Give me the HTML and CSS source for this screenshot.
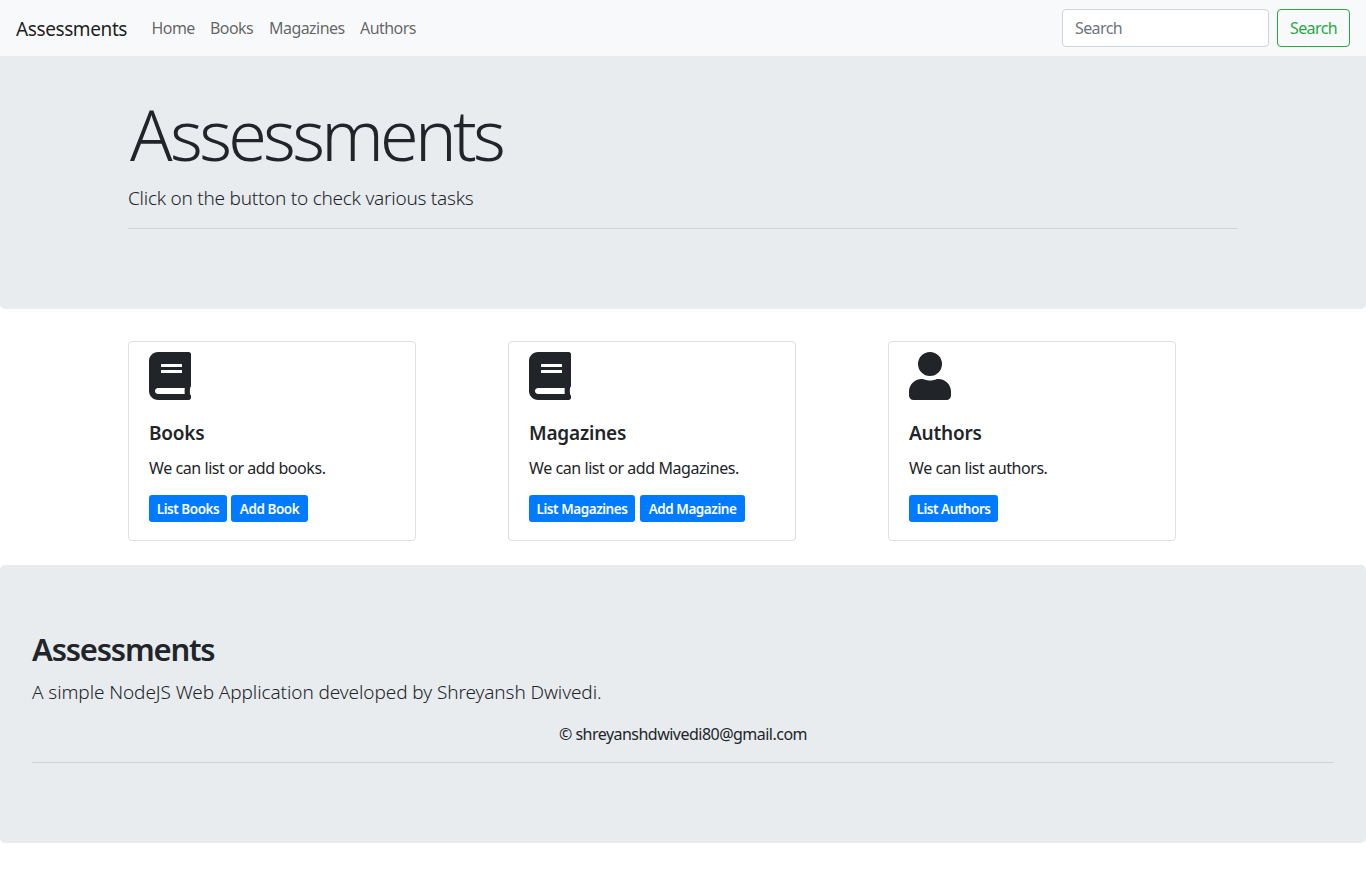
FILE: index.html
```html
<!DOCTYPE html>
<html lang="en">
<head>
<meta charset="utf-8">
<title>Assessments</title>
<link rel="stylesheet" href="styles.css">
</head>
<body>
<nav class="navbar">
  <a class="brand">Assessments</a>
  <ul class="nav">
    <li class="nav-home">Home</li>
    <li class="nav-books">Books</li>
    <li class="nav-magazines">Magazines</li>
    <li class="nav-authors">Authors</li>
  </ul>
  <form class="search">
    <input class="search-input" type="search" placeholder="Search">
    <button class="search-button" type="button">Search</button>
  </form>
</nav>
<header class="jumbotron hero">
  <div class="container">
    <h1 class="display"><span class="initial">A</span>ssessments</h1>
    <p class="lead hero-lead">Click on the button to check various tasks</p>
    <hr class="rule">
  </div>
</header>
<main class="container cards">
  <section class="card">
    <svg class="icon" viewBox="0 0 448 512"><path d="M448 360V24c0-13.300-10.700-24-24-24H96C43 0 0 43 0 96v320c0 53 43 96 96 96h328c13.300 0 24-10.700 24-24v-16c0-7.500-3.500-14.300-8.900-18.700-4.200-15.400-4.200-59.300 0-74.700 5.400-4.300 8.900-11.100 8.900-18.600zM128 134c0-3.300 2.700-6 6-6h212c3.300 0 6 2.700 6 6v20c0 3.300-2.700 6-6 6H134c-3.300 0-6-2.700-6-6zm0 64c0-3.300 2.700-6 6-6h212c3.300 0 6 2.700 6 6v20c0 3.300-2.700 6-6 6H134c-3.300 0-6-2.700-6-6zm253.400 250H96c-17.700 0-32-14.300-32-32 0-17.600 14.400-32 32-32h285.400c-1.900 17.100-1.900 46.900 0 64z"/></svg>
    <h2 class="card-title">Books</h2>
    <p class="card-text">We can list or add books.</p>
    <div class="actions"><a class="btn b1">List Books</a><a class="btn b2">Add Book</a></div>
  </section>
  <section class="card">
    <svg class="icon" viewBox="0 0 448 512"><path d="M448 360V24c0-13.300-10.700-24-24-24H96C43 0 0 43 0 96v320c0 53 43 96 96 96h328c13.300 0 24-10.700 24-24v-16c0-7.500-3.500-14.300-8.900-18.700-4.200-15.400-4.200-59.300 0-74.700 5.400-4.300 8.900-11.100 8.900-18.600zM128 134c0-3.300 2.700-6 6-6h212c3.300 0 6 2.700 6 6v20c0 3.300-2.700 6-6 6H134c-3.300 0-6-2.700-6-6zm0 64c0-3.300 2.700-6 6-6h212c3.300 0 6 2.700 6 6v20c0 3.300-2.700 6-6 6H134c-3.300 0-6-2.700-6-6zm253.400 250H96c-17.700 0-32-14.300-32-32 0-17.600 14.400-32 32-32h285.400c-1.900 17.100-1.900 46.900 0 64z"/></svg>
    <h2 class="card-title">Magazines</h2>
    <p class="card-text">We can list or add Magazines.</p>
    <div class="actions wide"><a class="btn b3">List Magazines</a><a class="btn b4">Add Magazine</a></div>
  </section>
  <section class="card">
    <svg class="icon" viewBox="0 0 448 512"><path d="M224 256A128 128 0 1 0 224 0a128 128 0 1 0 0 256zm89.600 32h-16.700c-22.200 10.200-46.900 16-72.900 16s-50.600-5.800-72.900-16h-16.700C60.200 288 0 348.200 0 422.400V464c0 26.500 21.500 48 48 48h352c26.500 0 48-21.500 48-48v-41.600c0-74.200-60.200-134.400-134.400-134.400z"/></svg>
    <h2 class="card-title">Authors</h2>
    <p class="card-text">We can list authors.</p>
    <div class="actions"><a class="btn b5">List Authors</a></div>
  </section>
</main>
<footer class="jumbotron footer">
  <h2 class="footer-title">Assessments</h2>
  <p class="lead footer-lead">A simple NodeJS Web Application developed by Shreyansh Dwivedi.</p>
  <p class="copyright">© shreyanshdwivedi80@gmail.com</p>
  <hr class="rule">
</footer>
</body>
</html>
```

FILE: styles.css
```css
*, *::before, *::after { box-sizing: border-box; }
body {
  margin: 0;
  background: #fff;
  color: #212529;
  font: 400 16px/24px "Segoe UI", "Noto Sans", "Open Sans", sans-serif;
}
h1, h2, p, ul { margin: 0; padding: 0; }
.navbar { display: flex; align-items: center; height: 56px; padding: 0 16px; background: #f8f9fa; }
.brand { width: 120px; padding-top: 1px; font-size: 19px; line-height: 30px; letter-spacing: -0.400px; color: rgba(0, 0, 0, .9); white-space: nowrap; }
.nav { display: flex; margin-left: 15.500px; list-style: none; color: rgba(0, 0, 0, .62); letter-spacing: -0.550px; }
.nav-home { width: 58.500px; } .nav-books { width: 59px; } .nav-magazines { width: 91px; } .nav-authors { width: 60px; }
.search { display: flex; gap: 8px; margin-left: auto; }
.search-input {
  width: 207px; height: 38px; padding: 6px 12px;
  border: 1px solid #ced4da; border-radius: 4px; background: #fff;
  font: inherit; letter-spacing: -0.600px; color: #495057;
}
.search-input::placeholder { color: #6c757d; opacity: 1; }
.search-button {
  width: 73px; height: 38px; padding: 0;
  border: 1px solid #28a745; border-radius: 4px; background: transparent;
  font: inherit; letter-spacing: -0.600px; color: #28a745;
}
.jumbotron { background: #e8ecef; border-radius: 5px; }
.container { width: 1110px; margin: 0 auto; }
.hero { height: 253px; padding-top: 35px; border-radius: 0 0 5px 5px; }
.display { padding-left: 2px; font-size: 70px; line-height: 86px; font-weight: 300; letter-spacing: -3.750px; margin-bottom: 6px; }
.initial { letter-spacing: -2.500px; }
.lead { font-size: 19px; line-height: 30px; font-weight: 300; white-space: nowrap; }
.hero-lead { letter-spacing: -0.250px; }
.rule { height: 1px; margin: 15px 0 0; border: 0; background: rgba(0, 0, 0, .1); }
.cards { display: grid; grid-template-columns: repeat(3, 288px); gap: 92px; margin-top: 32px; }
.card { height: 200px; padding: 10px 20px; border: 1px solid #dfdfdf; border-radius: 4px; }
.icon { display: block; width: 42px; height: 48px; fill: #212529; }
.card-title { margin: 21px 0 11px; font-size: 19px; line-height: 24px; font-weight: 600; letter-spacing: -0.200px; }
.card-text { letter-spacing: -0.430px; white-space: nowrap; }
.actions { display: flex; gap: 4px; margin-top: 15px; }
.wide { gap: 5px; }
.btn { height: 27px; border-radius: 3px; background: #007bff; color: #fff; font-size: 13.500px; line-height: 28px; font-weight: 600; letter-spacing: -0.450px; text-align: center; white-space: nowrap; }
.b1 { width: 78px; } .b2 { width: 77px; } .b3 { width: 106px; } .b4 { width: 105px; } .b5 { width: 89px; }
.footer { height: 278px; margin-top: 24px; padding: 64px 32px; }
.footer-title { font-size: 31px; line-height: 40px; font-weight: 600; letter-spacing: -1.200px; }
.footer-lead { margin-top: 8px; letter-spacing: -0.090px; }
.copyright { margin-top: 15px; letter-spacing: -0.520px; text-align: center; }
.footer .rule { margin-top: 16px; }
```
